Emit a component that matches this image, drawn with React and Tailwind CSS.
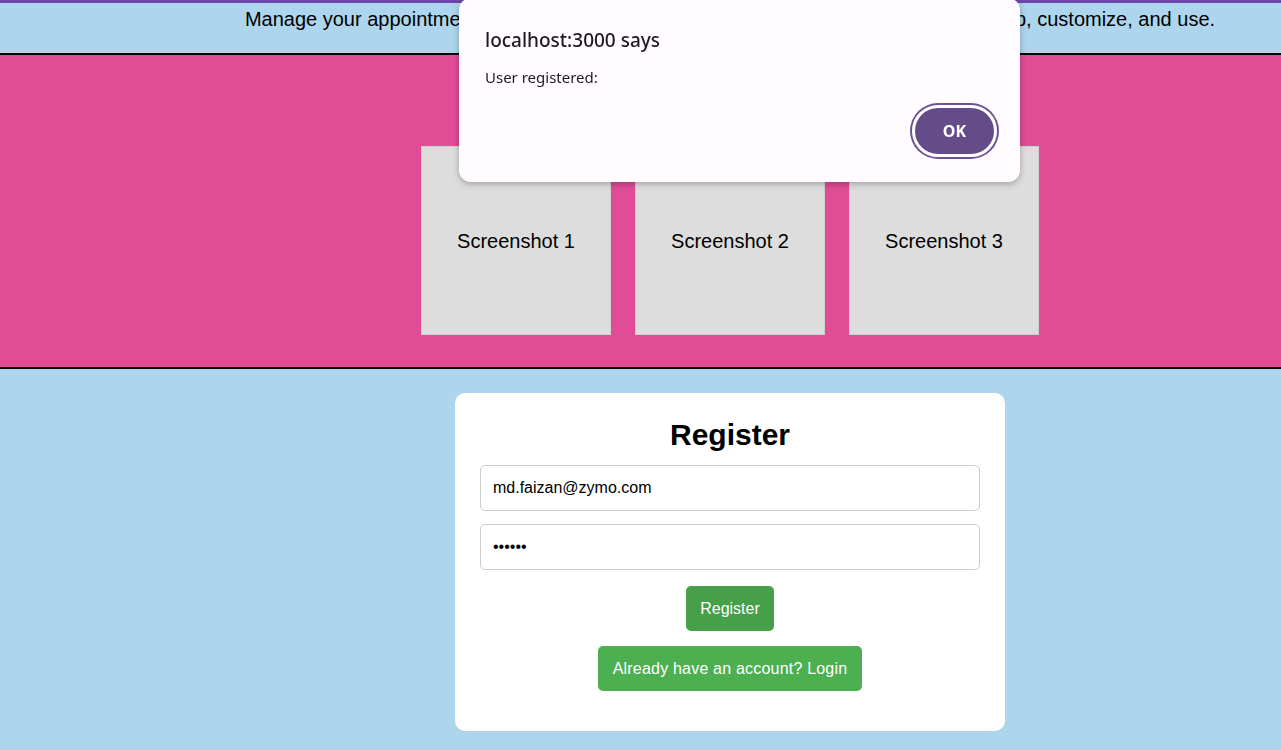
import { useState } from 'react'

const shots = ['Screenshot 1', 'Screenshot 2', 'Screenshot 3']

function AlertDialog() {
  return (
    <div className="fixed left-[459px] top-[-2px] w-[561px] rounded-[12px] bg-[#fffbfe] shadow-[0_2px_6px_rgba(0,0,0,0.28)] pl-[26px] pr-[23px] pt-[30px] pb-[25px] font-['Noto_Sans',sans-serif] text-[#1d1b20]">
      <h3 className="text-[19px] leading-[24px] font-medium">localhost:3000 says</h3>
      <p className="mt-[15px] text-[15px] leading-[20px]">User registered:</p>
      <div className="flex justify-end mt-[18px]">
        <button className="w-[85px] h-[52px] rounded-full bg-[#654b88] border-[3px] border-white ring-2 ring-[#6d5295] text-white text-[16px] font-bold">
          OK
        </button>
      </div>
    </div>
  )
}

export default function App() {
  const [email, setEmail] = useState('md.faizan@zymo.com')
  const [password, setPassword] = useState('secret')

  return (
    <div className="w-full min-h-screen overflow-hidden bg-[#add5ed] font-['Liberation_Sans',Arial,sans-serif] text-black">
      <div className="w-[1460px]">
        <div className="h-[3px] bg-[#6c47a7]" />
        <section className="h-[50px] pt-[5px] text-center">
          <p className="text-[20px] leading-[23px]">
            Manage your appointments effortlessly with our intuitive and modern app. Easy to set up, customize, and use.
          </p>
        </section>

        <section className="bg-[#e04c96] border-y-2 border-black pt-[24px] pb-[32px] flex flex-col items-center">
          <h2 className="text-[28px] leading-[34px] font-bold mb-[33px]">App Screenshots</h2>
          <div className="flex gap-[24px]">
            {shots.map(s => (
              <div key={s} className="w-[190px] h-[189px] bg-[#dddddd] border border-[#cfcfcf] flex items-center justify-center text-[20px]">
                {s}
              </div>
            ))}
          </div>
        </section>

        <section className="flex justify-center pt-[24px] pb-[20px]">
          <div className="w-[550px] bg-white rounded-[10px] px-[25px] pt-[25px] pb-[40px] flex flex-col items-center">
            <h2 className="text-[30px] leading-[34px] font-bold">Register</h2>
            <input
              value={email}
              onChange={e => setEmail(e.target.value)}
              className="mt-[13px] w-[500px] h-[46px] border border-[#cccccc] rounded-[5px] px-[12px] text-[16px] outline-none"
            />
            <input
              type="password"
              value={password}
              onChange={e => setPassword(e.target.value)}
              className="mt-[13px] w-[500px] h-[46px] border border-[#cccccc] rounded-[5px] px-[12px] text-[16px] outline-none"
            />
            <button className="mt-[16px] h-[45px] px-[14px] rounded-[5px] bg-[#45a049] text-white text-[16px]">
              Register
            </button>
            <button className="mt-[15px] h-[45px] px-[15px] rounded-[5px] bg-[#4caf50] text-white text-[16px] tracking-[0.2px]">
              Already have an account? Login
            </button>
          </div>
        </section>
      </div>
      <AlertDialog />
    </div>
  )
}
